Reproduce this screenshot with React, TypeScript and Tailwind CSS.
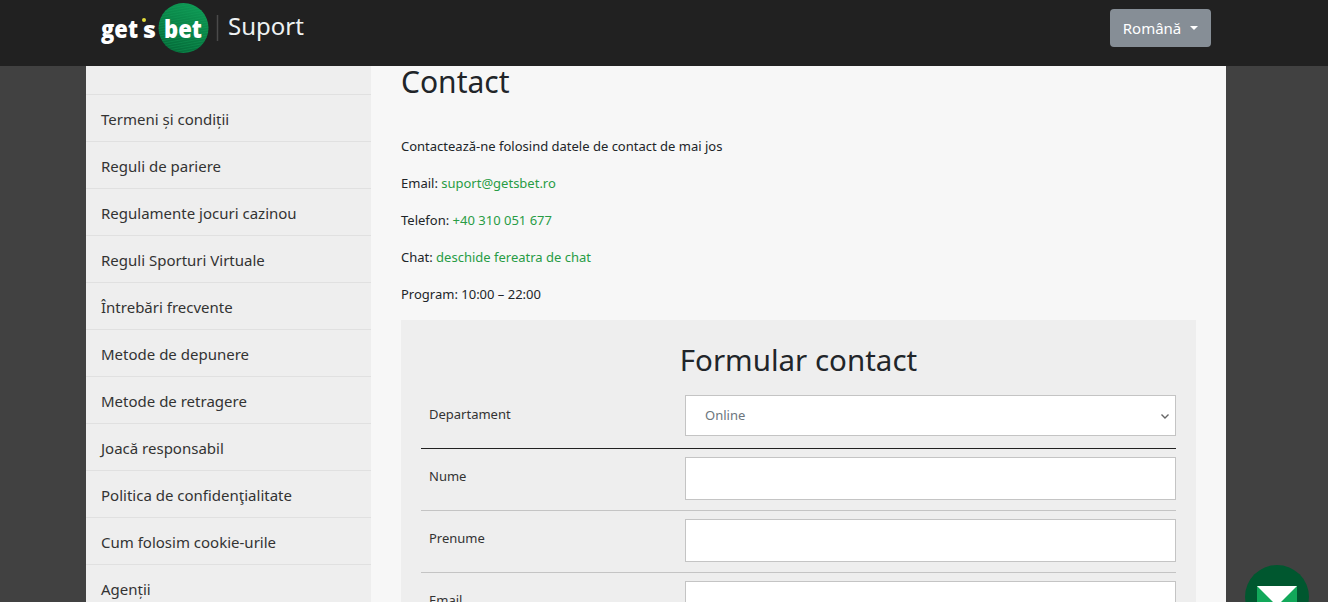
const nav = ["Termeni și condiții","Reguli de pariere","Regulamente jocuri cazinou","Reguli Sporturi Virtuale","Întrebări frecvente","Metode de depunere","Metode de retragere","Joacă responsabil","Politica de confidenţialitate","Cum folosim cookie-urile","Agenții"];

function Logo() {
  const stripes = Array.from({ length: 22 }, (_, i) => i * 2.6 + 2);
  return (
    <svg width="212" height="56" viewBox="0 0 212 56" className="block">
      <defs>
        <clipPath id="c"><circle cx="97.5" cy="28" r="25" /></clipPath>
        <linearGradient id="g" x1="0.7" y1="0" x2="0.3" y2="1">
          <stop offset="0" stopColor="#0f9a55" />
          <stop offset="1" stopColor="#056b39" />
        </linearGradient>
      </defs>
      <circle cx="97.5" cy="28" r="25" fill="url(#g)" />
      <g clipPath="url(#c)" stroke="#1aa862" strokeWidth="0.7" opacity="0.45">
        {stripes.map((y) => (<line key={y} x1="70" y1={y + 6} x2="125" y2={y - 4} />))}
      </g>
      <text x="15" y="38" fill="#fff" fontFamily="Open Sans, sans-serif" fontWeight="800" fontSize="25" textLength="37" lengthAdjust="spacingAndGlyphs">get</text>
      <circle cx="58" cy="20" r="2" fill="#e3dc3a" />
      <text x="57" y="38" fill="#fff" fontFamily="Open Sans, sans-serif" fontWeight="800" fontSize="22" textLength="13" lengthAdjust="spacingAndGlyphs">s</text>
      <text x="78" y="38" fill="#fff" fontFamily="Open Sans, sans-serif" fontWeight="800" fontSize="25" textLength="38" lengthAdjust="spacingAndGlyphs">bet</text>
      <line x1="131.5" y1="15" x2="131.5" y2="41" stroke="#4a4a4a" strokeWidth="1.5" />
    </svg>
  );
}

function Row({ label, children, line, h }: { label: string; children: React.ReactNode; line: string; h: string }) {
  return (
    <div className={`flex items-start border-b ${line} ${h}`}>
      <label className="w-[264px] pl-2 pt-[9px] text-[13px] leading-[20px] text-[#333]">{label}</label>
      <div className="flex-1">{children}</div>
    </div>
  );
}

export default function App() {
  return (
    <div className="h-[602px] overflow-hidden bg-[#414141] font-['Noto_Sans',sans-serif] text-[#212529]">
      <header className="h-[66px] bg-[#212121]">
        <div className="ml-[86px] flex h-full w-[1140px] items-start justify-between pr-[15px]">
          <div className="flex items-start">
            <Logo />
            <span className="ml-[-70px] pt-[8px] text-[24px] leading-[36px] text-[#eef2f2]">Suport</span>
          </div>
          <button className="mt-[9px] flex h-[38px] w-[101px] items-center justify-center gap-[9px] rounded bg-[#868e96] text-[15px] text-white">
            Română
            <span className="h-0 w-0 border-x-[4.5px] border-t-[4.5px] border-x-transparent border-t-white" />
          </button>
        </div>
      </header>
      <main className="ml-[86px] flex w-[1140px]">
        <aside className="w-[285px] bg-[#eeeeee] pt-[28px]">
          {nav.map((n) => (
            <div key={n} className="h-[47px] border-t border-[#e0e0e0] pl-[15px] pt-[12px] text-[15px] leading-[24px] text-[#333]">{n}</div>
          ))}
        </aside>
        <section className="h-[536px] flex-1 bg-[#f7f7f7] px-[30px]">
          <h1 className="mb-[38px] text-[30px] leading-[32px] text-[#212529]">Contact</h1>
          <div className="flex flex-col gap-[17px] text-[13px] leading-[20px]">
            <p>Contactează-ne folosind datele de contact de mai jos</p>
            <p>Email: <a className="text-[#289c45]">suport@getsbet.ro</a></p>
            <p>Telefon: <a className="text-[#289c45]">+40 310 051 677</a></p>
            <p>Chat: <a className="text-[#289c45]">deschide fereatra de chat</a></p>
            <p>Program: 10:00 – 22:00</p>
          </div>
          <div className="mt-[16px] h-[300px] bg-[#eeeeee] px-[20px]">
            <h2 className="pb-[15px] pt-[20px] text-center text-[29.5px] leading-[40px]">Formular contact</h2>
            <Row label="Departament" line="border-[#212121]" h="h-[54px]">
              <div className="flex h-[41px] items-center justify-between border border-[#c4c4c4] bg-white pl-[19px] pr-[5px] pt-[1px] text-[13px] text-[#6c757d]">
                Online
                <svg width="10" height="7" viewBox="0 0 10 7" fill="none" stroke="#666" strokeWidth="1.4"><path d="M1.5 1.5l3.5 3.5 3.5-3.5" /></svg>
              </div>
            </Row>
            <div className="pt-[8px]">
              <Row label="Nume" line="border-[#c4c4c4]" h="h-[54px]">
                <div className="h-[43px] border border-[#c4c4c4] bg-white" />
              </Row>
            </div>
            <div className="pt-[8px]">
              <Row label="Prenume" line="border-[#c4c4c4]" h="h-[54px]">
                <div className="h-[43px] border border-[#c4c4c4] bg-white" />
              </Row>
            </div>
            <div className="pt-[8px]">
              <Row label="Email" line="border-[#c4c4c4]" h="h-[54px]">
                <div className="h-[43px] border border-[#c4c4c4] bg-white" />
              </Row>
            </div>
          </div>
        </section>
      </main>
      <div className="fixed left-[1245px] top-[565px] flex h-[64px] w-[64px] justify-center rounded-full bg-[#00572f] pt-[21px]">
        <svg width="40" height="30" viewBox="0 0 40 30">
          <rect width="40" height="30" fill="#12a85a" />
          <path d="M0 0h40L20 20z" fill="#fff" />
        </svg>
      </div>
    </div>
  );
}
